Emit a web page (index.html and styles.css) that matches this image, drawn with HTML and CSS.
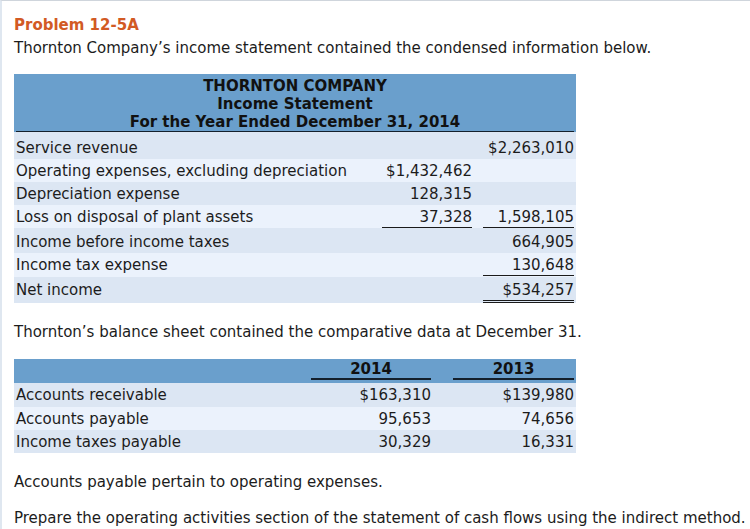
FILE: index.html
```html
<!DOCTYPE html>
<html lang="en">
<head>
<meta charset="utf-8">
<title>Problem 12-5A</title>
<link rel="stylesheet" href="styles.css">
</head>
<body>
<div class="page">
  <h1 class="title">Problem 12-5A</h1>
  <p class="intro">Thornton Company’s income statement contained the condensed information below.</p>

  <div class="statement">
    <div class="st-head">
      <div class="st-head-inner">
        <div>THORNTON COMPANY</div>
        <div>Income Statement</div>
        <div>For the Year Ended December 31, 2014</div>
      </div>
    </div>
    <div class="row r1 shade">
      <span class="lbl">Service revenue</span><span class="val"></span><span class="val">$2,263,010</span>
    </div>
    <div class="row r2 light">
      <span class="lbl">Operating expenses, excluding depreciation</span><span class="val">$1,432,462</span><span class="val"></span>
    </div>
    <div class="row r3 shade">
      <span class="lbl">Depreciation expense</span><span class="val">128,315</span><span class="val"></span>
    </div>
    <div class="row r4 light">
      <span class="lbl">Loss on disposal of plant assets</span><span class="val ul">37,328</span><span class="val ul">1,598,105</span>
    </div>
    <div class="row r5 shade">
      <span class="lbl">Income before income taxes</span><span class="val"></span><span class="val">664,905</span>
    </div>
    <div class="row r6 light">
      <span class="lbl">Income tax expense</span><span class="val"></span><span class="val ul">130,648</span>
    </div>
    <div class="row r7 shade">
      <span class="lbl">Net income</span><span class="val"></span><span class="val dul">$534,257</span>
    </div>
  </div>

  <p class="para p-bal">Thornton’s balance sheet contained the comparative data at December 31.</p>

  <div class="balance">
    <div class="brow bhead">
      <span class="lbl"></span><span class="yr">2014</span><span class="yr">2013</span>
    </div>
    <div class="brow b1 shade">
      <span class="lbl">Accounts receivable</span><span class="val">$163,310</span><span class="val">$139,980</span>
    </div>
    <div class="brow b2 light">
      <span class="lbl">Accounts payable</span><span class="val">95,653</span><span class="val">74,656</span>
    </div>
    <div class="brow b3 shade">
      <span class="lbl">Income taxes payable</span><span class="val">30,329</span><span class="val">16,331</span>
    </div>
  </div>

  <p class="para p-ap">Accounts payable pertain to operating expenses.</p>
  <p class="para p-prep">Prepare the operating activities section of the statement of cash flows using the indirect method.</p>
</div>
</body>
</html>
```

FILE: styles.css
```css
html, body {
  margin: 0;
  padding: 0;
  background: #ffffff;
}

body {
  font-family: "DejaVu Sans", Verdana, sans-serif;
  font-size: 15px;
  color: #1c1c1c;
}

.page {
  min-height: 528px;
  border-top: 1px solid #cfd5dc;
  border-left: 2px solid #dfe7f0;
  padding: 14px 0 0 12px;
}

.title {
  margin: 0;
  font-size: 15px;
  line-height: 20px;
  font-weight: bold;
  color: #d25a24;
}

.intro {
  margin: 3px 0 0;
  line-height: 20px;
}

.para {
  margin: 0;
  line-height: 20px;
  white-space: nowrap;
}

.p-bal { margin-top: 19px; }
.p-ap { margin-top: 19px; }
.p-prep { margin-top: 16px; }

/* Income statement */
.statement {
  width: 562px;
  margin-top: 16px;
}

.st-head {
  background: #6a9fcc;
  padding: 3px 2px 0;
}

.st-head-inner {
  border-bottom: 1px solid #14202c;
  text-align: center;
  font-weight: bold;
  line-height: 18px;
  color: #111111;
}

.shade { background: #dce6f3; }
.light { background: #ebf2fc; }

.row {
  display: grid;
  grid-template-columns: 1fr 90px 91px;
  column-gap: 11px;
  align-items: start;
  padding: 0 2px;
  box-sizing: border-box;
  line-height: 20px;
  white-space: nowrap;
}

.r1 { height: 27px; padding-top: 6px; }
.r2 { height: 23px; padding-top: 2px; }
.r3 { height: 23px; padding-top: 2px; }
.r4 { height: 23px; padding-top: 2px; }
.r5 { height: 25px; padding-top: 4px; }
.r6 { height: 24px; padding-top: 2px; }
.r7 { height: 26px; padding-top: 3px; }

.lbl {
  display: block;
}

.val {
  display: block;
  text-align: right;
}

.ul {
  border-bottom: 1px solid #1a1a1a;
}

.dul {
  border-bottom: 3px double #1a1a1a;
}

/* Balance sheet */
.balance {
  width: 562px;
  margin-top: 17px;
}

.brow {
  display: grid;
  grid-template-columns: 1fr 120px 121px;
  column-gap: 22px;
  align-items: start;
  padding: 0 2px;
  box-sizing: border-box;
  line-height: 20px;
  white-space: nowrap;
}

.bhead {
  background: #6a9fcc;
  height: 24px;
  padding-top: 1px;
}

.yr {
  display: block;
  text-align: center;
  font-weight: bold;
  line-height: 18px;
  color: #111111;
  border-bottom: 2px solid #14202c;
}

.b1 { height: 24px; padding-top: 2px; }
.b2 { height: 23px; padding-top: 2px; }
.b3 { height: 23px; padding-top: 2px; }
```
